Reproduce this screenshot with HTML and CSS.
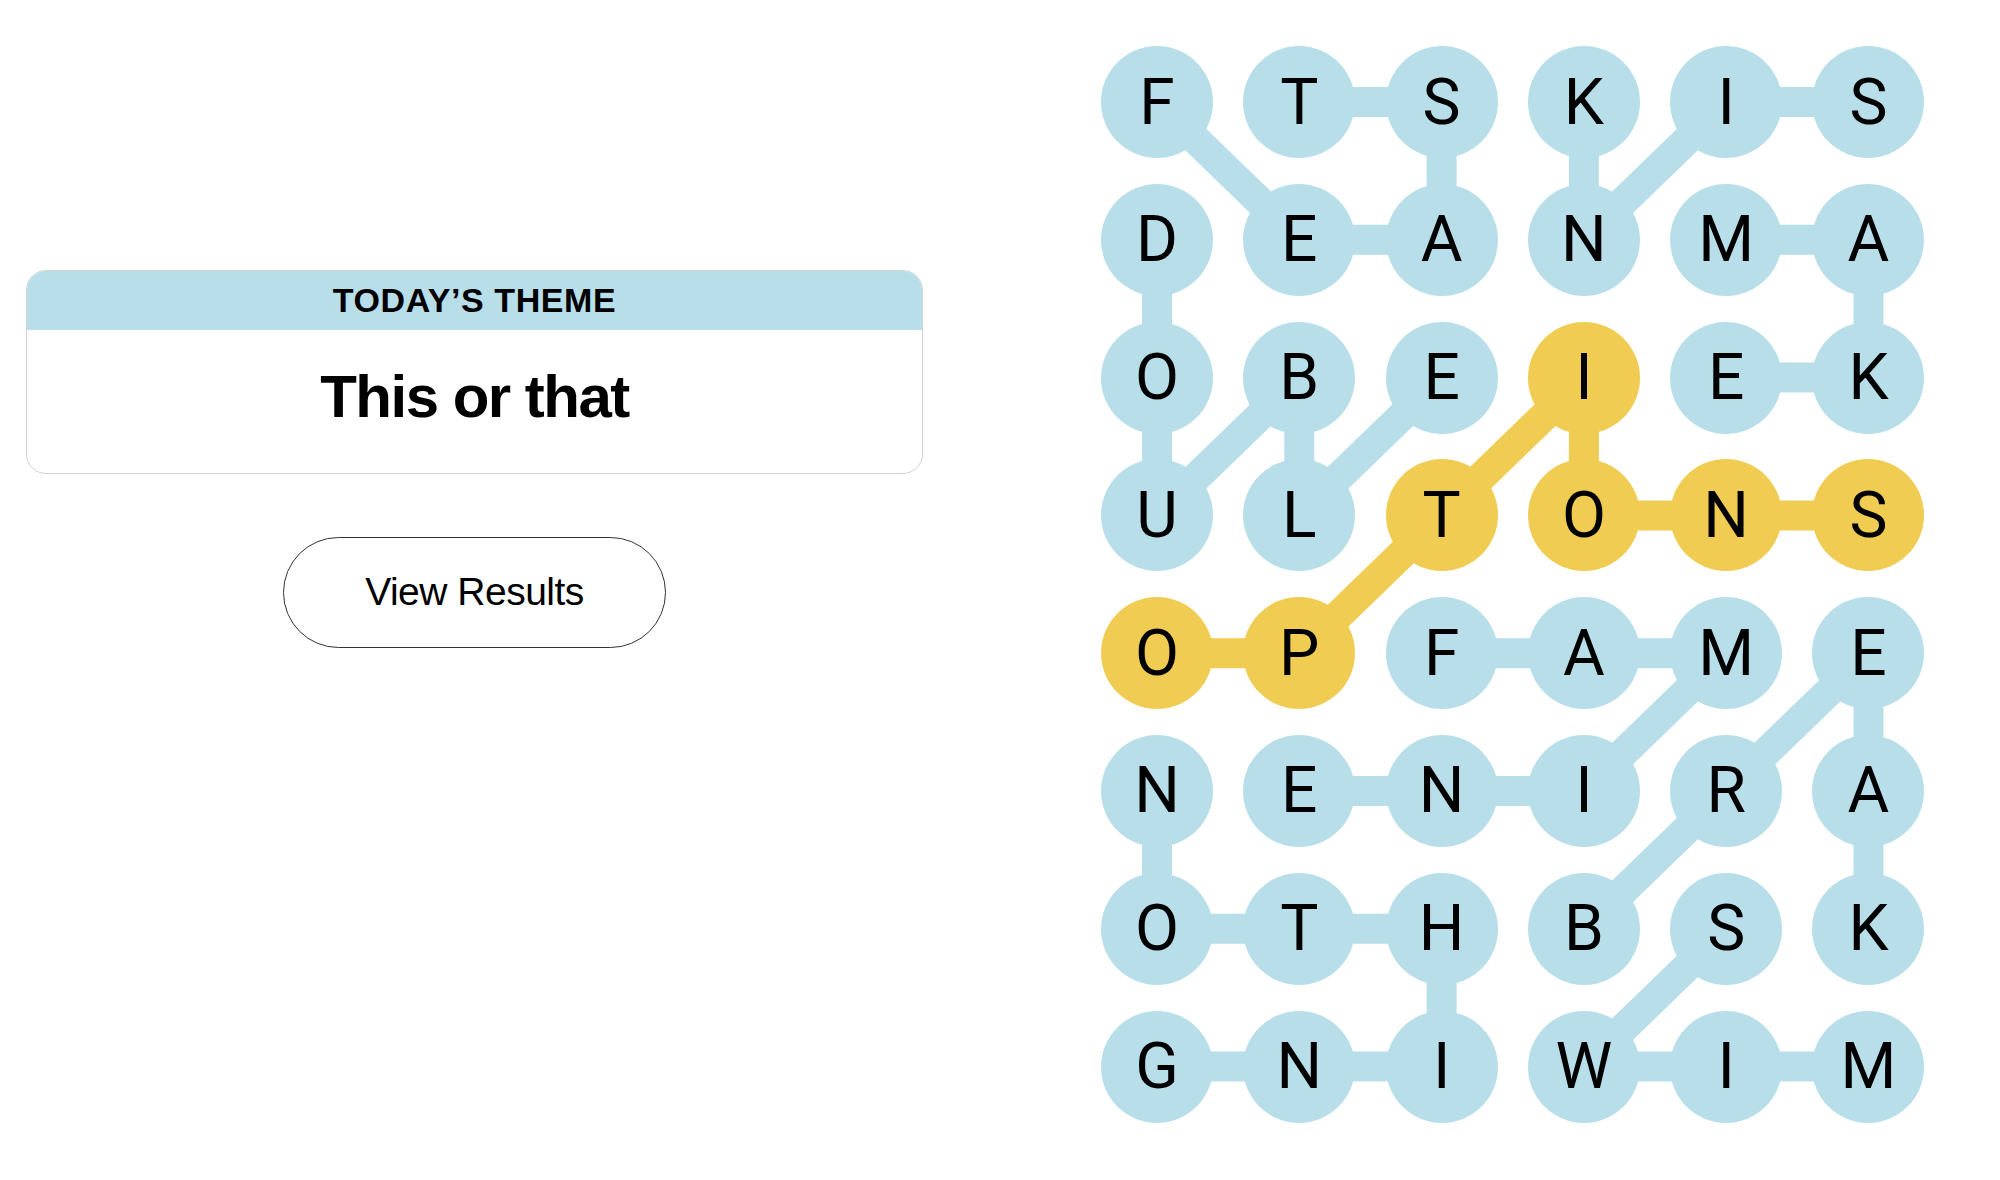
FILE: index.html
```html
<!DOCTYPE html>
<html lang="en">
<head>
    <meta charset="UTF-8">
    <title>Strands - This or that</title>
    <link rel="stylesheet" href="styles.css">
</head>
<body>
<div class="page">
    <div class="side">
        <div class="theme">
            <div class="theme_head">TODAY’S THEME</div>
            <div class="theme_body">This or that</div>
        </div>
        <button class="results">View Results</button>
    </div>

    <div class="board">
        <!-- found words, drawn under the letters -->
        <svg class="paths" viewBox="0 0 823.5 1076.6" width="823.5" height="1076.6">
            <g class="word">
                <polyline points="56,56 198.3,193.8 340.6,193.8 340.6,56 198.3,56"/>
                <polyline points="767.5,56 625.2,56 482.9,193.8 482.9,56"/>
                <polyline points="625.2,193.8 767.5,193.8 767.5,331.6 625.2,331.6"/>
                <polyline points="56,193.8 56,331.6 56,469.4 198.3,331.6 198.3,469.4 340.6,331.6"/>
                <polyline points="340.6,607.2 482.9,607.2 625.2,607.2 482.9,745 340.6,745 198.3,745"/>
                <polyline points="482.9,882.8 625.2,745 767.5,607.2 767.5,745 767.5,882.8"/>
                <polyline points="56,745 56,882.8 198.3,882.8 340.6,882.8 340.6,1020.6 198.3,1020.6 56,1020.6"/>
                <polyline points="625.2,882.8 482.9,1020.6 625.2,1020.6 767.5,1020.6"/>
            </g>
            <g class="word spangram">
                <polyline points="56,607.2 198.3,607.2 340.6,469.4 482.9,331.6 482.9,469.4 625.2,469.4 767.5,469.4"/>
            </g>
        </svg>

        <div class="grid">
            <div class="letter">F</div>
            <div class="letter">T</div>
            <div class="letter">S</div>
            <div class="letter">K</div>
            <div class="letter">I</div>
            <div class="letter">S</div>

            <div class="letter">D</div>
            <div class="letter">E</div>
            <div class="letter">A</div>
            <div class="letter">N</div>
            <div class="letter">M</div>
            <div class="letter">A</div>

            <div class="letter">O</div>
            <div class="letter">B</div>
            <div class="letter">E</div>
            <div class="letter on">I</div>
            <div class="letter">E</div>
            <div class="letter">K</div>

            <div class="letter">U</div>
            <div class="letter">L</div>
            <div class="letter on">T</div>
            <div class="letter on">O</div>
            <div class="letter on">N</div>
            <div class="letter on">S</div>

            <div class="letter on">O</div>
            <div class="letter on">P</div>
            <div class="letter">F</div>
            <div class="letter">A</div>
            <div class="letter">M</div>
            <div class="letter">E</div>

            <div class="letter">N</div>
            <div class="letter">E</div>
            <div class="letter">N</div>
            <div class="letter">I</div>
            <div class="letter">R</div>
            <div class="letter">A</div>

            <div class="letter">O</div>
            <div class="letter">T</div>
            <div class="letter">H</div>
            <div class="letter">B</div>
            <div class="letter">S</div>
            <div class="letter">K</div>

            <div class="letter">G</div>
            <div class="letter">N</div>
            <div class="letter">I</div>
            <div class="letter">W</div>
            <div class="letter">I</div>
            <div class="letter">M</div>
        </div>
    </div>
</div>
</body>
</html>
```

FILE: styles.css
```css
body {
    margin: 0;
    background-color: #fff;
    color: #000;
    font-family: "Liberation Sans", Arial, sans-serif;
}
.page {
    display: flex;
    align-items: flex-start;
    padding: 46px 0 0 26px;
}
.side {
    width: 897px;
    padding-top: 224px;
    display: flex;
    flex-direction: column;
    align-items: center;
}
.theme {
    width: 100%;
    box-sizing: border-box;
    border: 1px solid #d2d2d2;
    border-radius: 20px;
    overflow: hidden;
    text-align: center;
}
.theme_head {
    height: 59px;
    line-height: 59px;
    background-color: #b8deea;
    font-size: 34px;
    font-weight: bold;
    letter-spacing: 0.6px;
}
.theme_body {
    height: 143px;
    box-sizing: border-box;
    padding-bottom: 10px;
    line-height: 133px;
    font-size: 60px;
    font-weight: bold;
    letter-spacing: -1.5px;
}
.results {
    width: 383px;
    height: 111px;
    margin-top: 63px;
    box-sizing: border-box;
    padding: 0 0 3px;
    border: 1.5px solid #333;
    border-radius: 56px;
    background-color: #fff;
    color: #000;
    font-family: "Liberation Sans", Arial, sans-serif;
    font-size: 39px;
    line-height: 105px;
    letter-spacing: -0.5px;
}
.board {
    position: relative;
    margin-left: 178px;
}
.paths {
    position: absolute;
    left: 0;
    top: 0;
}
.word polyline {
    fill: none;
    stroke: #b8deea;
    stroke-width: 30;
    stroke-linejoin: round;
}
.spangram polyline {
    stroke: #f0cd52;
}
.grid {
    position: relative;
    display: grid;
    grid-template-columns: repeat(6, 112px);
    grid-auto-rows: 112px;
    column-gap: 30.3px;
    row-gap: 25.8px;
}
.letter {
    display: flex;
    align-items: center;
    justify-content: center;
    border-radius: 50%;
    background-color: #b8deea;
    font-family: Roboto, "Liberation Sans", sans-serif;
    font-size: 64px;
    font-weight: 400;
}
.on {
    background-color: #f0cd52;
}
```
